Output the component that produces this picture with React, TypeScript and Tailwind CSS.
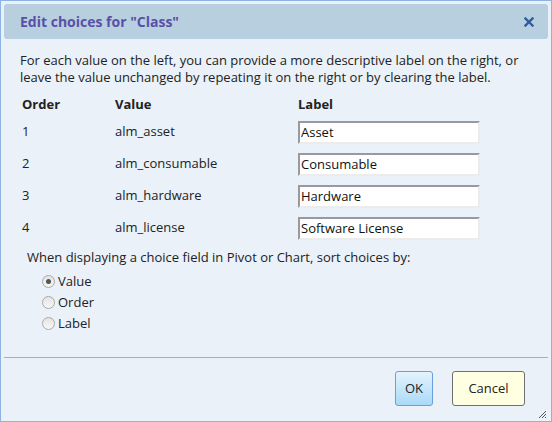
import { useState } from 'react';

const rows = [
  { order: 1, value: 'alm_asset', label: 'Asset' },
  { order: 2, value: 'alm_consumable', label: 'Consumable' },
  { order: 3, value: 'alm_hardware', label: 'Hardware' },
  { order: 4, value: 'alm_license', label: 'Software License' },
];

const sortOptions = ['Value', 'Order', 'Label'];

const App = () => {
  const [labels, setLabels] = useState(rows.map(r => r.label));
  const [sortBy, setSortBy] = useState('Value');

  return (
    <div
      className="w-[552px] h-[422px] bg-[#eaf1f9] border border-[#8db2e3] flex flex-col text-[13px] text-[#222]"
      style={{ fontFamily: '"Open Sans", "Noto Sans", sans-serif' }}
    >
      {/* Title bar */}
      <div className="mx-[3px] mt-[3px] h-[35px] rounded-[3px] bg-[#b8cfe0] flex items-center justify-between pl-[16px] pr-[14px]">
        <span className="font-bold text-[14px] text-[#5a4fa8]">Edit choices for "Class"</span>
        <svg width="10" height="10" viewBox="0 0 10 10">
          <path d="M1.5 1.5 L8.5 8.5 M8.5 1.5 L1.5 8.5" stroke="#2f5c9e" strokeWidth="2.4" strokeLinecap="square" />
        </svg>
      </div>

      <div className="flex-1 px-[19px] pt-[13px]">
        <p className="leading-[17px]">
          For each value on the left, you can provide a more descriptive label on the right, or leave the value
          unchanged by repeating it on the right or by clearing the label.
        </p>

        <div className="mt-[8px] ml-[2px] grid grid-cols-[93px_183px_182px] items-center font-bold h-[22px]">
          <span>Order</span>
          <span>Value</span>
          <span>Label</span>
        </div>
        {rows.map((r, i) => (
          <div key={r.order} className="ml-[2px] grid grid-cols-[93px_183px_182px] items-center h-[32px]">
            <span>{r.order}</span>
            <span>{r.value}</span>
            <input
              value={labels[i]}
              onChange={e => setLabels(labels.map((l, j) => (j === i ? e.target.value : l)))}
              className="w-[182px] h-[23px] bg-white pl-[1px] border-2 border-t-[#9a9a9a] border-l-[#9a9a9a] border-b-[#ececec] border-r-[#ececec] outline-none text-[13px] text-[#111]"
            />
          </div>
        ))}

        <div className="mt-[4px] ml-[7px] leading-[18px]">
          When displaying a choice field in Pivot or Chart, sort choices by:
        </div>
        <div className="ml-[22px] mt-[5px] flex flex-col">
          {sortOptions.map(opt => (
            <label key={opt} className="h-[21px] flex items-center gap-[3px] cursor-pointer">
              <span className="w-[13px] h-[13px] rounded-full border border-[#a9a9a9] bg-gradient-to-b from-[#e4e4e4] to-[#f7f7f7] flex items-center justify-center">
                {sortBy === opt && <span className="w-[5px] h-[5px] rounded-full bg-[#555]" />}
              </span>
              <input type="radio" className="hidden" checked={sortBy === opt} onChange={() => setSortBy(opt)} />
              <span>{opt}</span>
            </label>
          ))}
        </div>
      </div>

      {/* Footer */}
      <div className="mx-[3px] border-t border-[#8db2e3] h-[64px] flex justify-end items-start pt-[13px] pr-[23px] gap-[19px] relative">
        <button className="w-[38px] h-[35px] rounded-[3px] border border-[#6a9ee0] bg-gradient-to-b from-[#e4f3fd] to-[#a9daf6] text-[13px]">
          OK
        </button>
        <button className="w-[73px] h-[35px] rounded-[3px] border border-[#707070] bg-[#ffffe2] text-[13px]">
          Cancel
        </button>
        <svg className="absolute right-[1px] bottom-[2px]" width="10" height="10" viewBox="0 0 10 10">
          <path d="M9 2 L2 9 M9 5 L5 9 M9 8 L8 9" stroke="#555" strokeWidth="1" />
        </svg>
      </div>
    </div>
  );
};

export default App;
